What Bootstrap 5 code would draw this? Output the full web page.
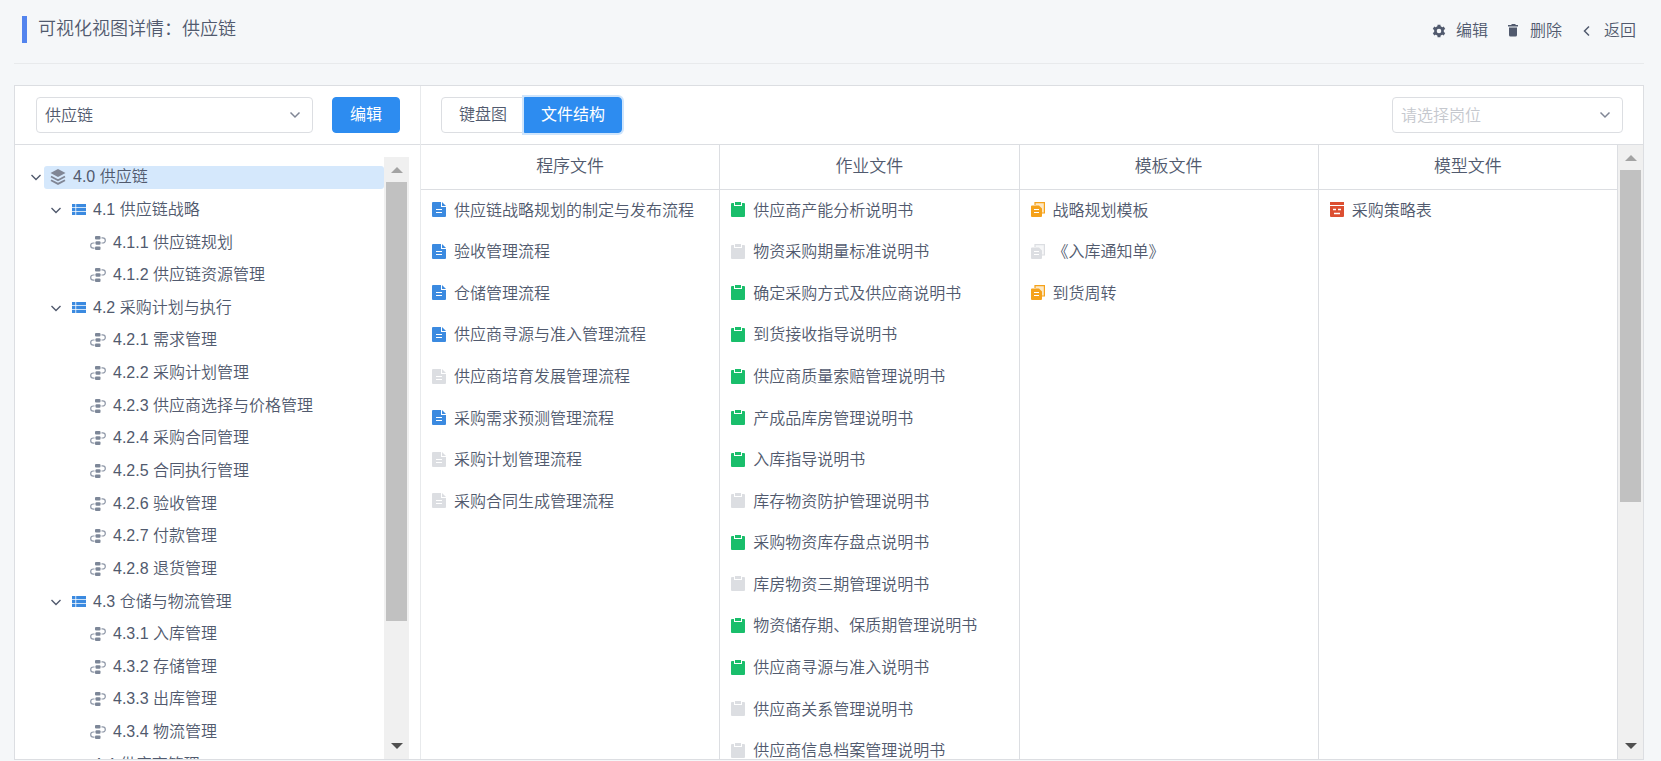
<!DOCTYPE html>
<html lang="zh-CN">
<head>
<meta charset="utf-8">
<meta name="viewport" content="width=device-width, initial-scale=1">
<title>可视化视图详情</title>
<link href="https://cdn.jsdelivr.net/npm/bootstrap@5.3.0/dist/css/bootstrap.min.css" rel="stylesheet">
<style>
:root { --line: #dcdee2; --ink: #515a6e; --blue: #2d8cf0; }
body { font: 350 16px/24px "Liberation Sans", "Noto Sans CJK SC", sans-serif; color: var(--ink); background: #f5f7f9; }
a { color: inherit; text-decoration: none; }
svg { display: block; flex: none; }
.page { height: 100vh; padding: 0 17px 1px 14px; }
.page-head { height: 64px; border-bottom: 1px solid #e8eaec; padding: 0 8px; margin-bottom: 21px; }
.page-title { font-size: 18px; line-height: 27px; font-weight: 350; border-left: 5px solid #5384ee; padding-left: 11px; margin: 16px 0 0; height: 27px; }
.actions { gap: 18px; padding-top: 19px; }
.actions a { display: flex; gap: 10px; }
.panel { background: #fff; border: 1px solid var(--line); min-height: 0; }
.side { width: 406px; border-right: 1px solid #e8eaec; }
.toolbar { height: 59px; border-bottom: 1px solid var(--line); padding: 0 20px; flex: none; }
.side .toolbar { padding-left: 21px; }
.form-select { font-size: 16px; font-weight: 350; color: var(--ink); height: 36px; line-height: 24px; padding: 5px 32px 3px 8px; border-color: var(--line); border-radius: 4px;
  background-image: url("data:image/svg+xml,%3Csvg xmlns='http://www.w3.org/2000/svg' viewBox='0 0 12 12'%3E%3Cpath d='M1.5 3.5 6 8l4.500-4.500' fill='none' stroke='%23808695' stroke-width='1.500'/%3E%3C/svg%3E"); background-size: 12px; background-position: right 11px center; }
.form-select.empty { color: #c5c8ce; }
.side .form-select { width: 277px; }
.post-select { width: 231px; }
.btn { --bs-btn-font-size: 16px; --bs-btn-line-height: 24px; --bs-btn-padding-y: 5px; --bs-btn-padding-x: 17px; --bs-btn-border-radius: 4px; font-weight: 350; height: 36px; }
.btn-primary { --bs-btn-bg: var(--blue); --bs-btn-border-color: var(--blue); font-weight: 400; }
.btn-plain { --bs-btn-border-color: var(--line); --bs-btn-color: var(--ink); background: #fff; }
.btn-group .btn { --bs-btn-padding-x: 16px; }
.btn-group .btn-plain { --bs-btn-padding-x: 17px; }
.btn-glow { box-shadow: 0 0 0 2px #cfe5fc; }
.scroll-area { min-height: 0; overflow: hidden; }
.tree-area { margin-top: 12px; padding-right: 11px; }
.tree { display: grid; grid-template-rows: repeat(19, 1fr); height: 620px; margin: 4px 0 0; flex: 1; }
.tree li { display: flex; align-items: center; padding-left: 15px; }
.tree .lv1 { padding-left: 35px; }
.tree .lv2 { padding-left: 69px; }
.tree .caret { margin-right: 2px; }
.node { flex: 1; display: flex; align-items: center; height: 23px; padding-left: 6px; gap: 7px; white-space: nowrap; border-radius: 3px; }
.lv1 .node { padding-left: 8px; }
.node.on { background: #d5e8fc; }
.bar { width: 25px; background: #f0f0f0; flex: none; display: flex; flex-direction: column; align-items: center; }
.bar i { display: block; width: 21px; background: #c1c1c1; }
.bar svg { height: 25px; width: 12px; }
.cols .col { border-right: 1px solid var(--line); display: flex; flex-direction: column; min-width: 0; }
.col-title { font-size: 17px; font-weight: 350; line-height: 24px; padding: 10px 0; margin: 0; text-align: center; border-bottom: 1px solid var(--line); }
.files { display: grid; grid-template-rows: repeat(14, 1fr); height: 582px; flex: none; margin: 0; }
.files li { display: flex; align-items: center; gap: 8px; padding-left: 11px; white-space: nowrap; }
.files svg { margin-bottom: 2px; }
.c-blue { color: #3b8ae0; } .c-green { color: #19be6b; } .c-orange { color: #f5a21b; } .c-red { color: #dc4f32; } .c-gray { color: #dcdee2; }
.c-slate { color: #808695; }
</style>
</head>
<body>
<svg width="0" height="0" class="position-absolute" aria-hidden="true">
  <symbol id="caret" viewBox="0 0 12 12"><path d="M1.500 4 6 8.500 10.500 4" fill="none" stroke="#515a6e" stroke-width="1.400"/></symbol>
  <symbol id="layers" viewBox="0 0 16 16"><path d="M8 0 15.500 4 8 8 .500 4Z" fill="currentColor"/><path d="M1 7.500 8 11.200l7-3.700M1 11.200l7 3.700 7-3.700" fill="none" stroke="currentColor" stroke-width="1.800"/></symbol>
  <symbol id="list" viewBox="0 0 14 11"><path d="M0 0h3.400v3.200H0zM4.200 0H14v3.200H4.200zM0 3.900h3.400v3.200H0zM4.200 3.900H14v3.200H4.200zM0 7.800h3.400V11H0zM4.200 7.800H14V11H4.200z" fill="currentColor"/></symbol>
  <symbol id="flow" viewBox="0 0 16 14"><g fill="#7d8798"><rect x="5" y="0" width="5.500" height="3.400" rx="1"/><rect x="5.500" y="5.300" width="5" height="3.400" rx="1"/><rect x="5" y="10.600" width="5.500" height="3.400" rx="1"/></g><path d="M11.500 1.800h1.200a2.500 2.500 0 0 1 0 5.200h-1.200M4.500 7H3.300a2.500 2.500 0 0 0 0 5.200h1.200" fill="none" stroke="#8f98a8" stroke-width="1.200"/></symbol>
  <symbol id="doc" viewBox="0 0 14 15"><path d="M1 0h8v5h5v9a1 1 0 0 1-1 1H1a1 1 0 0 1-1-1V1a1 1 0 0 1 1-1ZM10 0l4 4h-4Z" fill="currentColor"/><path d="M4 7.500h6M4 10.500h6" stroke="#fff" stroke-width="1.200"/></symbol>
  <symbol id="clip" viewBox="0 0 14 15"><path d="M1 1h2v3h8V1h2a1 1 0 0 1 1 1v12a1 1 0 0 1-1 1H1a1 1 0 0 1-1-1V2a1 1 0 0 1 1-1ZM4 0h6v3H4Z" fill="currentColor"/></symbol>
  <symbol id="copy" viewBox="0 0 14 15"><path d="M4 3V.600h9.400V11H11" fill="currentColor" fill-opacity=".25" stroke="currentColor" stroke-width="1.200"/><path d="M1 3.500h7L11 6.500V14a1 1 0 0 1-1 1H1a1 1 0 0 1-1-1V4.500a1 1 0 0 1 1-1Z" fill="currentColor"/><path d="M3 7.500h5M3 10.500h5" stroke="#fff" stroke-width="1.100"/></symbol>
  <symbol id="form" viewBox="0 0 14 15"><path d="M0 0h14v3H0zM0 4h14v10a1 1 0 0 1-1 1H1a1 1 0 0 1-1-1Z" fill="currentColor"/><path d="M3 7.500h3M8 7.500h3M4 11.500h6" stroke="#fff" stroke-width="1.400"/></symbol>
  <symbol id="up" viewBox="0 0 12 25"><path d="M6 10l6 6H0Z" fill="#a3a3a3"/></symbol>
  <symbol id="down" viewBox="0 0 12 25"><path d="M0 9h12l-6 6Z" fill="#505050"/></symbol>
</svg>
<div class="page d-flex flex-column overflow-hidden">
  <header class="page-head d-flex justify-content-between flex-shrink-0">
    <h1 class="page-title">可视化视图详情：供应链</h1>
    <nav class="actions d-flex" aria-label="操作">
      <a href="#"><svg width="14" height="24" viewBox="0 0 14 24"><g transform="translate(7 12)" fill="none" stroke="#515a6e"><circle r="3.600" stroke-width="2.600"/><path d="M0-6.300V-4M0 6.300V4M-5.500-3.200-3.500-2M5.500 3.200 3.500 2M-5.500 3.200-3.500 2M5.500-3.200 3.500-2" stroke-width="3"/></g></svg><span>编辑</span></a>
      <a href="#"><svg width="14" height="24" viewBox="0 0 14 24"><path d="M2 6h3l1-1h3l1 1h2v1.500H2ZM3 8.500h8V16a1.500 1.500 0 0 1-1.500 1.500h-5A1.500 1.500 0 0 1 3 16Z" fill="#515a6e"/></svg><span>删除</span></a>
      <a href="#"><svg width="14" height="24" viewBox="0 0 14 24"><path d="M9 7.500 4.500 12 9 16.500" fill="none" stroke="#515a6e" stroke-width="1.500"/></svg><span>返回</span></a>
    </nav>
  </header>
  <main class="panel d-flex flex-fill">
    <aside class="side d-flex flex-column flex-shrink-0">
      <div class="toolbar d-flex align-items-center justify-content-between">
        <select class="form-select" aria-label="视图"><option>供应链</option></select>
        <button type="button" class="btn btn-primary">编辑</button>
      </div>
      <div class="scroll-area tree-area d-flex flex-fill">
        <ul class="tree list-unstyled" id="tree"></ul>
        <div class="bar"><svg><use href="#up"/></svg><i style="height:73%"></i><svg class="mt-auto"><use href="#down"/></svg></div>
      </div>
    </aside>
    <section class="d-flex flex-column flex-fill">
      <div class="toolbar d-flex align-items-center justify-content-between">
        <div class="btn-group"><button type="button" class="btn btn-plain">键盘图</button><button type="button" class="btn btn-primary btn-glow">文件结构</button></div>
        <select class="form-select empty post-select" aria-label="岗位"><option>请选择岗位</option></select>
      </div>
      <div class="scroll-area d-flex flex-fill">
        <div class="cols d-flex flex-fill" id="cols"></div>
        <div class="bar"><svg><use href="#up"/></svg><i style="height:54%"></i><svg class="mt-auto"><use href="#down"/></svg></div>
      </div>
    </section>
  </main>
</div>
<script>
const icon = (id, w, h, c = '') => `<svg width="${w}" height="${h}" class="${c}" aria-hidden="true"><use href="#${id}"/></svg>`;
const tree = ['4.0 供应链','4.1 供应链战略','4.1.1 供应链规划','4.1.2 供应链资源管理','4.2 采购计划与执行','4.2.1 需求管理','4.2.2 采购计划管理','4.2.3 供应商选择与价格管理','4.2.4 采购合同管理','4.2.5 合同执行管理','4.2.6 验收管理','4.2.7 付款管理','4.2.8 退货管理','4.3 仓储与物流管理','4.3.1 入库管理','4.3.2 存储管理','4.3.3 出库管理','4.3.4 物流管理','4.4 供应商管理'];
document.getElementById('tree').innerHTML = tree.map((t, i) => {
  const lv = i === 0 ? 0 : t.split(' ')[0].split('.').length - 1;
  const ic = [icon('layers', 16, 16, 'c-slate'), icon('list', 14, 11, 'c-blue'), icon('flow', 16, 14)][lv];
  return `<li class="lv${lv}">${lv < 2 ? icon('caret', 12, 12, 'caret') : ''}<span class="node${i ? '' : ' on'}">${ic}${t}</span></li>`;
}).join('');
// A leading "-" marks a file that is not published yet.
const cols = [
  ['程序文件','doc','c-blue',['供应链战略规划的制定与发布流程','验收管理流程','仓储管理流程','供应商寻源与准入管理流程','-供应商培育发展管理流程','采购需求预测管理流程','-采购计划管理流程','-采购合同生成管理流程']],
  ['作业文件','clip','c-green',['供应商产能分析说明书','-物资采购期量标准说明书','确定采购方式及供应商说明书','到货接收指导说明书','供应商质量索赔管理说明书','产成品库房管理说明书','入库指导说明书','-库存物资防护管理说明书','采购物资库存盘点说明书','-库房物资三期管理说明书','物资储存期、保质期管理说明书','供应商寻源与准入说明书','-供应商关系管理说明书','-供应商信息档案管理说明书']],
  ['模板文件','copy','c-orange',['战略规划模板','-《入库通知单》','到货周转']],
  ['模型文件','form','c-red',['采购策略表']]
];
document.getElementById('cols').innerHTML = cols.map(([h, ic, c, rows]) =>
  `<div class="col"><h2 class="col-title">${h}</h2><ul class="files list-unstyled">${rows.map(r => {
    const off = r[0] === '-';
    return `<li>${icon(ic, 14, 15, off ? 'c-gray' : c)}<span>${off ? r.slice(1) : r}</span></li>`;
  }).join('')}</ul></div>`).join('');
</script>
<script src="https://cdn.jsdelivr.net/npm/bootstrap@5.3.0/dist/js/bootstrap.bundle.min.js"></script>
</body>
</html>
